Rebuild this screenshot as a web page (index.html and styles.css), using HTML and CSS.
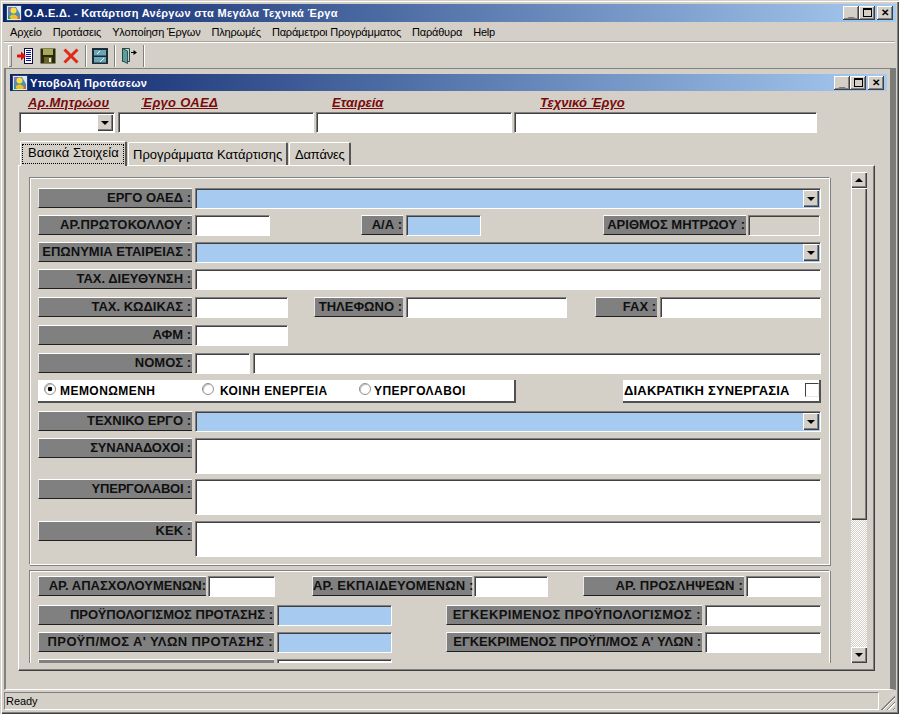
FILE: index.html
```html
<!DOCTYPE html>
<html lang="el">
<head>
<meta charset="utf-8">
<title>Ο.Α.Ε.Δ.</title>
<link rel="stylesheet" href="styles.css">
</head>
<body>
<svg class="defs" width="0" height="0">
  <symbol id="appicon" viewBox="0 0 16 16">
    <rect x="0.500" y="0.500" width="15" height="15" fill="#dfe8f0" stroke="#24406e"/>
    <rect x="2" y="2" width="12" height="12" fill="#4f8fb0"/>
    <path d="M2 2H7L2 8Z" fill="#9070b0"/>
    <path d="M10 2H14V9Z" fill="#e8e0f0"/>
    <circle cx="7.500" cy="5.500" r="3" fill="#f8e040"/>
    <path d="M3 14C3 8 12 8 12 14Z" fill="#f0c020"/>
    <path d="M2 10L5 14H2Z" fill="#20a060"/>
    <path d="M11 14L14 10V14Z" fill="#e06030"/>
  </symbol>
</svg>
<div class="app">
  <header class="title main-title">
    <svg class="title-icon"><use href="#appicon"/></svg>
    <span class="title-text">Ο.Α.Ε.Δ. - Κατάρτιση Ανέργων στα Μεγάλα Τεχνικά Έργα</span>
    <div class="caps"><span class="cap">_</span><span class="cap"><i class="max"></i></span><span class="cap cap-x">✕</span></div>
  </header>
  <nav class="menu">
    <span>Αρχείο</span><span>Προτάσεις</span><span>Υλοποίηση Έργων</span><span>Πληρωμές</span><span>Παράμετροι Προγράμματος</span><span>Παράθυρα</span><span>Help</span>
  </nav>
  <div class="toolbar">
    <i class="grip"></i>
    <svg class="tool" viewBox="0 0 16 16"><rect x="7.500" y="0.500" width="8" height="15" fill="#fff" stroke="#101040"/><path d="M9 2.500h5M9 4.500h5M9 6.500h5M9 8.500h5M9 10.500h5M9 12.500h5" stroke="#1010a0"/><path d="M0 6.500H4V3.500L9 8 4 12.500V9.500H0Z" fill="#e01010"/></svg>
    <svg class="tool" viewBox="0 0 16 16"><path d="M0.500 0.500H15.500V15.500H0.500Z" fill="#2a2a08"/><rect x="3" y="1" width="10" height="6" fill="#a8a858"/><rect x="4" y="9" width="8" height="6" fill="#66662a"/><rect x="9" y="10" width="2" height="4" fill="#e8e8d0"/></svg>
    <svg class="tool" viewBox="0 0 16 16"><path d="M1.500 1.500L14.500 14.500M14.500 1.500L1.500 14.500" stroke="#e02818" stroke-width="3"/></svg>
    <i class="sep"></i>
    <svg class="tool" viewBox="0 0 16 16"><rect width="16" height="16" fill="#1c2c34"/><rect x="2" y="2" width="12" height="5.500" fill="#6aa6b8"/><rect x="2" y="9" width="12" height="5.500" fill="#6aa6b8"/><path d="M5 6l3-3M8 14l4-4" stroke="#e4f4ff"/></svg>
    <i class="sep"></i>
    <svg class="tool" viewBox="0 0 16 16"><path d="M1.500 0.500H8.500V13.500H1.500Z" fill="#b8d8d8" stroke="#304848"/><path d="M1.500 0.500L6.500 3V15.500L1.500 13Z" fill="#58a0a0" stroke="#203838" stroke-width=".8"/><path d="M10 4h2.500V2L16 4.500 12.500 7V5H10Z" fill="#000"/></svg>
    <i class="sep"></i>
  </div>

  <div class="workspace">
    <section class="child">
      <header class="title child-title">
        <svg class="title-icon"><use href="#appicon"/></svg>
        <span class="title-text">Υποβολή Προτάσεων</span>
        <div class="caps"><span class="cap">_</span><span class="cap"><i class="max"></i></span><span class="cap cap-x">✕</span></div>
      </header>

      <div class="filters">
        <div class="filter f1"><a>Αρ.Μητρώου</a><div class="input combo white"><span class="drop"></span></div></div>
        <div class="filter f2"><a>Έργο ΟΑΕΔ</a><div class="input"></div></div>
        <div class="filter f3"><a>Εταιρεία</a><div class="input"></div></div>
        <div class="filter f4"><a>Τεχνικό Έργο</a><div class="input"></div></div>
      </div>

      <div class="tabs">
        <span class="tab active"><b>Βασικά Στοιχεία</b></span>
        <span class="tab">Προγράμματα Κατάρτισης</span>
        <span class="tab">Δαπάνες</span>
      </div>

      <div class="panel">
        <div class="scroller">
          <fieldset class="group g1">
            <div class="row">
              <label class="w154">ΕΡΓΟ ΟΑΕΔ :</label><div class="input grow blue combo"><span class="drop"></span></div>
            </div>
            <div class="row">
              <label class="w154 ls-a">ΑΡ.ΠΡΩΤΟΚΟΛΛΟΥ :</label><div class="input i75"></div>
              <label class="w42 ml91">Α/Α :</label><div class="input i75 blue"></div>
              <label class="w143 ml122">ΑΡΙΘΜΟΣ ΜΗΤΡΩΟΥ :</label><div class="input i72 gray"></div>
            </div>
            <div class="row">
              <label class="w154">ΕΠΩΝΥΜΙΑ ΕΤΑΙΡΕΙΑΣ :</label><div class="input grow blue combo"><span class="drop"></span></div>
            </div>
            <div class="row row-7">
              <label class="w154">ΤΑΧ. ΔΙΕΥΘΥΝΣΗ :</label><div class="input grow"></div>
            </div>
            <div class="row row-7">
              <label class="w154">ΤΑΧ. ΚΩΔΙΚΑΣ :</label><div class="input i93"></div>
              <label class="w89 ml26">ΤΗΛΕΦΩΝΟ :</label><div class="input i161"></div>
              <label class="w62 ml28">FAX :</label><div class="input grow"></div>
            </div>
            <div class="row row-7">
              <label class="w154">ΑΦΜ :</label><div class="input i93"></div>
            </div>
            <div class="row">
              <label class="w154">ΝΟΜΟΣ :</label><div class="input i55"></div><div class="input grow"></div>
            </div>
            <div class="row options">
              <div class="radios">
                <span class="radio on r1">ΜΕΜΟΝΩΜΕΝΗ</span>
                <span class="radio r2">ΚΟΙΝΗ ΕΝΕΡΓΕΙΑ</span>
                <span class="radio r3">ΥΠΕΡΓΟΛΑΒΟΙ</span>
              </div>
              <div class="check">ΔΙΑΚΡΑΤΙΚΗ ΣΥΝΕΡΓΑΣΙΑ<i class="box"></i></div>
            </div>
            <div class="row">
              <label class="w154">ΤΕΧΝΙΚΟ ΕΡΓΟ :</label><div class="input grow blue combo"><span class="drop"></span></div>
            </div>
            <div class="row tall tall-5">
              <label class="w154 ls-c">ΣΥΝΑΝΑΔΟΧΟΙ :</label><div class="input grow area"></div>
            </div>
            <div class="row tall">
              <label class="w154 ls-c">ΥΠΕΡΓΟΛΑΒΟΙ :</label><div class="input grow area"></div>
            </div>
            <div class="row tall">
              <label class="w154">ΚΕΚ :</label><div class="input grow area"></div>
            </div>
          </fieldset>

          <fieldset class="group g2">
            <div class="row row-tight">
              <label class="w168 tight">ΑΡ. ΑΠΑΣΧΟΛΟΥΜΕΝΩΝ:</label><div class="input i67"></div>
              <label class="w160 ml37 ls-a">ΑΡ. ΕΚΠΑΙΔΕΥΟΜΕΝΩΝ :</label><div class="input i74"></div>
              <label class="w161 ml35 ls-a">ΑΡ. ΠΡΟΣΛΗΨΕΩΝ :</label><div class="input grow"></div>
            </div>
            <div class="row">
              <label class="w236">ΠΡΟΫΠΟΛΟΓΙΣΜΟΣ ΠΡΟΤΑΣΗΣ :</label><div class="input i115 blue"></div>
              <label class="w256 ml54 ls-b">ΕΓΚΕΚΡΙΜΕΝΟΣ ΠΡΟΫΠΟΛΟΓΙΣΜΟΣ :</label><div class="input grow"></div>
            </div>
            <div class="row">
              <label class="w236 ls-b">ΠΡΟΫΠ/ΜΟΣ Α' ΥΛΩΝ ΠΡΟΤΑΣΗΣ :</label><div class="input i115 blue"></div>
              <label class="w256 ml54">ΕΓΚΕΚΡΙΜΕΝΟΣ ΠΡΟΫΠ/ΜΟΣ Α' ΥΛΩΝ :</label><div class="input grow"></div>
            </div>
            <div class="row">
              <label class="w236"></label><div class="input i115"></div>
            </div>
          </fieldset>
        </div>
        <div class="scrollbar">
          <span class="sb-btn up"></span>
          <span class="thumb"></span>
          <span class="track"></span>
          <span class="sb-btn down"></span>
        </div>
      </div>
    </section>
  </div>

  <footer class="status">
    <span class="status-text">Ready</span>
    <span class="resize"></span>
  </footer>
</div>
</body>
</html>
```

FILE: styles.css
```css
* { box-sizing: border-box; }
html, body { margin: 0; padding: 0; height: 100%; }
body { background: #d4d0c8; font-family: "Liberation Sans", Arial, sans-serif; color: #000; overflow: hidden; }
.defs { position: absolute; }

.app {
  width: 899px; height: 714px; padding: 4px;
  display: flex; flex-direction: column;
  background: #d4d0c8;
  box-shadow: inset 1px 1px #d4d0c8, inset 2px 2px #fff, inset -1px -1px #404040, inset -2px -2px #808080;
}

/* title bars */
.title {
  display: flex; align-items: center; flex: none;
  background: linear-gradient(90deg, #0a246a 0%, #a6caf0 100%);
  color: #fff; font-weight: bold;
}
.main-title { height: 18px; padding: 0 3px; margin: 0 -1px; }
.main-title .title-text { font-size: 11px; letter-spacing: .32px; margin-left: 2px; }
.child-title { height: 17px; padding: 0 3px 0 2px; }
.child-title .title-text { font-size: 11px; letter-spacing: .3px; margin-left: 2px; }
.title-icon { width: 16px; height: 16px; flex: none; }
.caps { margin-left: auto; display: flex; }
.cap {
  width: 16px; height: 14px; background: #d4d0c8; color: #000; font-size: 11px; line-height: 12px; text-align: center;
  box-shadow: inset -1px -1px #404040, inset 1px 1px #fff, inset -2px -2px #808080;
  display: flex; align-items: flex-start; justify-content: center; font-weight: bold;
}
.cap + .cap:last-child { margin-left: 2px; }
.cap-x { font-size: 10px; line-height: 13px; }
.max { width: 9px; height: 9px; border: 1px solid #000; border-top-width: 2px; margin-top: 2px; }

/* menu */
.menu { display: flex; height: 20px; align-items: center; font-size: 11px; letter-spacing: -.19px; padding-left: 6px; gap: 11px; flex: none; border-bottom: 1px solid #a8a49c; }
.menu span { white-space: nowrap; }

/* toolbar */
.toolbar { height: 26px; display: flex; align-items: center; padding-left: 4px; flex: none; border-top: 1px solid #fff; }
.grip { width: 4px; height: 22px; background: #d4d0c8; box-shadow: inset 1px 1px #fff, inset -1px -1px #808080; margin-right: 5px; }
.tool { width: 16px; height: 16px; margin-right: 7px; flex: none; }
.sep { width: 2px; height: 22px; background: #808080; border-right: 1px solid #fff; margin: 0 5px 0 -1px; }

/* workspace */
.workspace { flex: 1; min-height: 0; display: flex; border-top: 1px solid #808080; border-right: 6px solid #7a7a76; border-left: 2px solid #808080; border-bottom: 1px solid #fff; margin-right: -1px; }
.child { flex: 1; padding: 5px 3px 0 4px; min-width: 0; display: flex; flex-direction: column; overflow: hidden; }

/* filters */
.filters { display: flex; height: 50px; padding-left: 9px; gap: 2px; flex: none; }
.filter { display: flex; flex-direction: column; }
.filter a { font-size: 13px; font-style: italic; font-weight: bold; color: #7a0a0a; text-decoration: underline; height: 21px; line-height: 15px; white-space: nowrap; padding-top: 4px; }
.f1 { width: 96px; margin-right: 1px; } .f1 a { padding-left: 9px; letter-spacing: .2px; }
.f2 { width: 196px; } .f2 a { padding-left: 23px; letter-spacing: .3px; }
.f3 { width: 196px; } .f3 a { padding-left: 16px; }
.f4 { width: 303px; } .f4 a { padding-left: 26px; }
.filter .input { height: 21px; flex: none; }

/* inputs */
.input {
  height: 21px; background: #fff; position: relative; flex: none;
  border: 1px solid; border-color: #808080 #fff #fff #808080;
  box-shadow: inset 1px 1px #404040;
}
.grow { flex: 1; min-width: 0; }
.blue { background: #a6caf0; }
.gray { background: #d4d0c8; }
.area { height: 36px; }
.i55 { width: 55px; } .i67 { width: 67px; } .i72 { width: 72px; margin-left: -1px; } .i74 { width: 74px; }
.i75 { width: 75px; } .i93 { width: 93px; } .i115 { width: 115px; } .i161 { width: 161px; }

.drop {
  position: absolute; right: 1px; top: 1px; bottom: 1px; width: 16px; background: #d4d0c8;
  box-shadow: inset 1px 1px #fff, inset -1px -1px #404040, inset -2px -2px #808080;
}
.drop::after {
  content: ""; position: absolute; left: 4px; top: 7px;
  border: 4px solid transparent; border-top-color: #000; border-bottom-width: 0;
}

/* tabs */
.tabs { display: flex; padding-left: 10px; height: 24px; flex: none; position: relative; z-index: 1; align-items: flex-end; }
.tab {
  height: 23px; font-size: 13px; padding: 3px 4px 0; background: #d4d0c8; white-space: nowrap;
  border-top: 1px solid #fff; border-left: 1px solid #fff; border-right: 2px solid #555;
  border-radius: 2px 2px 0 0; line-height: 17px;
}
.tab.active { height: 25px; padding: 2px 1px 1px 1px; width: 107px; margin-bottom: -1px; }
.tab.active b { font-weight: normal; display: block; border: 1px dotted #000; padding: 0 0 0 5px; height: 20px; line-height: 15px; letter-spacing: .05px; }
.tab:nth-child(2) { width: 160px; margin-left: 1px; }
.tab:nth-child(3) { width: 62px; margin-left: 1px; padding-left: 5px; letter-spacing: -.2px; }

/* panel */
.panel {
  height: 506px; width: 857px; margin-left: 8px; flex: none;
  border: 1px solid; border-color: #fff #404040 #404040 #fff;
  box-shadow: inset -1px -1px #808080;
  display: flex; padding: 6px 8px 7px 10px;
}
.scroller { width: 810px; overflow: hidden; flex: none; }
.group { margin: 5px 0 0 0; padding: 0; border: 1px solid; border-color: #808080 #fff #fff #808080; box-shadow: inset 1px 1px #fff, 1px 1px #808080; min-width: 0; width: 801px; }
.g1 { height: 388px; padding: 10px 8px 0 8px; }
.g2 { margin-top: 5px; height: 120px; padding: 5px 8px 0 8px; }

.row { display: flex; gap: 3px; align-items: flex-start; margin-bottom: 6px; height: 21px; }
.row-7 { margin-bottom: 7px; }
.row.tall { height: 36px; margin-bottom: 6px; }
.row.tall-5 { margin-bottom: 5px; }
.row-tight { margin-bottom: 8px; gap: 2px; }
label {
  height: 20px; flex: none; background: #808080; color: #101010; font-size: 13px; font-weight: bold; text-align: right; white-space: nowrap;
  line-height: 17px; padding: 0 1px 0 0;
  border-top: 1px solid #fff; border-bottom: 1px solid #202020; border-left: 1px solid #e8e8e8;
}
.ls-a { letter-spacing: .18px; }
.ls-b { letter-spacing: .4px; }
.ls-c { letter-spacing: -.2px; }
.tight { padding-right: 0; }
.w42 { width: 42px; } .w62 { width: 62px; } .w89 { width: 89px; } .w143 { width: 143px; } .w154 { width: 154px; } .w160 { width: 160px; } .w161 { width: 161px; } .w168 { width: 168px; } .w236 { width: 236px; } .w256 { width: 256px; }
.ml91 { margin-left: 88px; } .ml122 { margin-left: 119px; } .ml26 { margin-left: 23px; } .ml28 { margin-left: 25px; } .ml37 { margin-left: 35px; } .ml35 { margin-left: 33px; } .ml54 { margin-left: 51px; }

/* radio row */
.options { justify-content: space-between; height: 23px; margin-bottom: 8px; }
.radios { width: 478px; height: 23px; background: #fff; display: flex; align-items: center; border-bottom: 2px solid #505050; border-right: 2px solid #505050; }
.radio { display: flex; align-items: center; white-space: nowrap; font-weight: bold; font-size: 12px; letter-spacing: .45px; }
.radio::before {
  content: ""; width: 10px; height: 10px; border-radius: 50%; flex: none; margin-right: 4px; margin-top: -3px;
  background: #fff; border: 1px solid #909090; box-shadow: inset 1px 1px #c0c0c0;
}
.radio.on::before { background: radial-gradient(circle, #000 0 2px, #fff 2.600px); }
.r1 { margin-left: 6px; width: 158px; }
.r2 { width: 157px; }
.r2::before { margin-right: 6px; }
.r3::before { margin-right: 3px; }
.check { width: 198px; height: 23px; background: #fff; font-size: 13px; letter-spacing: .2px; font-weight: bold; display: flex; align-items: center; justify-content: space-between; border-bottom: 2px solid #505050; border-right: 2px solid #505050; white-space: nowrap; padding-left: 1px; }
.box { width: 14px; height: 14px; border: 1px solid; border-color: #404040 #e8e8e8 #e8e8e8 #404040; background: #fff; margin-top: -2px; }

/* scrollbar */
.scrollbar { width: 16px; display: flex; flex-direction: column; margin-left: 12px; flex: none; height: 491px; }
.sb-btn { height: 16px; flex: none; background: #d4d0c8; position: relative; box-shadow: inset 1px 1px #fff, inset -1px -1px #404040, inset -2px -2px #808080; }
.sb-btn::after { content: ""; position: absolute; left: 4px; top: 6px; border: 4px solid transparent; border-top-width: 0; border-bottom-color: #000; }
.sb-btn.down::after { border-bottom-width: 0; border-top-width: 4px; border-top-color: #000; border-bottom-color: transparent; }
.thumb { height: 332px; flex: none; background: #d4d0c8; box-shadow: inset 1px 1px #fff, inset -1px -1px #404040, inset -2px -2px #808080; }
.track { flex: 1; background: repeating-conic-gradient(#fff 0 25%, #d4d0c8 0 50%) 0 0 / 2px 2px; }

/* status */
.status { height: 18px; flex: none; margin-top: 2px; display: flex; font-size: 11px; letter-spacing: -.05px; }
.status-text { flex: 1; padding-left: 1px; line-height: 17px; border: 1px solid; border-color: #808080 #fff #fff #808080; }
.resize { width: 16px; flex: none; background: repeating-linear-gradient(135deg, #d4d0c8 0 2px, #808080 2px 3px, #fff 3px 4px); clip-path: polygon(100% 0, 100% 100%, 0 100%); }
```
